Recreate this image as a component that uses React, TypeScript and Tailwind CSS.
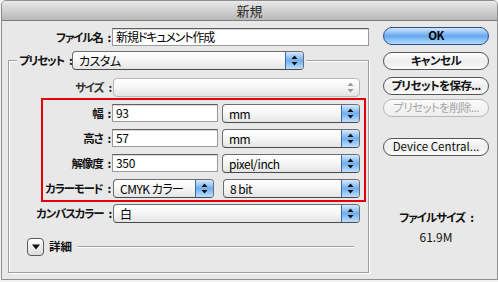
import type { ReactNode } from 'react'

function Arrows({ disabled }: { disabled?: boolean }) {
  const c = disabled ? '#9a9a9a' : '#111'
  return (
    <svg width="7" height="11" viewBox="0 0 7 11">
      <path d="M3.5 0.5 L6.5 4 L0.5 4 Z" fill={c} />
      <path d="M0.5 7 L6.5 7 L3.5 10.5 Z" fill={c} />
    </svg>
  )
}

function Popup({ text, className, disabled }: { text: string; className: string; disabled?: boolean }) {
  return (
    <div
      className={`flex h-[19px] shrink-0 overflow-hidden rounded-[4px] border bg-gradient-to-b from-white via-[#f6f6f6] to-[#e4e4e4] ${
        disabled ? 'border-[#b9b9b9]' : 'border-[#6d6d6d] border-b-[#4a4a4a]'
      } ${className}`}
    >
      <span className="flex-1 truncate whitespace-nowrap pl-[6px] text-[12px] leading-[17px] tracking-[-0.5px] text-black">
        {text}
      </span>
      {disabled ? (
        <span className="flex w-[18px] items-center justify-center">
          <Arrows disabled />
        </span>
      ) : (
        <span className="flex w-[18px] items-center justify-center border-l border-[#3f69a8] bg-gradient-to-b from-[#d7eafd] via-[#6fafef] to-[#bfe0fe]">
          <Arrows />
        </span>
      )}
    </div>
  )
}

function Field({ text, className, jp }: { text: string; className: string; jp?: boolean }) {
  return (
    <div
      className={`h-[18px] shrink-0 whitespace-nowrap border border-[#9a9a9a] border-t-[#5f5f5f] bg-white pl-[3px] text-[12px] leading-[16px] text-black shadow-[inset_0_1px_0_#d8d8d8] ${
        jp ? 'tracking-[-1.1px]' : 'tracking-[-0.3px]'
      } ${className}`}
    >
      {text}
    </div>
  )
}

function Label({ children, className }: { children: ReactNode; className: string }) {
  return (
    <div
      className={`shrink-0 whitespace-nowrap pr-[2px] text-right text-[11.5px] font-bold leading-[19px] tracking-[-1.2px] text-[#111] ${className}`}
    >
      {children}
      <span className="ml-[5px]">:</span>
    </div>
  )
}

function AquaButton({ children, kind }: { children: ReactNode; kind?: 'default' | 'disabled' }) {
  const look =
    kind === 'default'
      ? 'border-[#2d4f86] bg-gradient-to-b from-[#d2e7fc] via-[#64a6ee] to-[#b4dcfe] text-black font-bold'
      : kind === 'disabled'
        ? 'border-[#b8b8b8] bg-gradient-to-b from-[#fafafa] to-[#eeeeee] text-[#a3a3a3]'
        : 'border-[#555] bg-gradient-to-b from-white via-[#ededed] to-[#fbfbfb] text-[#111] font-bold'
  return (
    <div
      className={`flex h-[18px] w-[106px] items-center justify-center whitespace-nowrap rounded-full border text-[11.5px] leading-none tracking-[-0.6px] ${look}`}
    >
      {children}
    </div>
  )
}

function Etch({ className }: { className: string }) {
  return <div className={`h-[2px] border-t border-[#a2a2a2] border-b border-b-white ${className}`} />
}

export default function App() {
  return (
    <div className="h-[282px] w-[498px] overflow-hidden bg-[#f2f2f2] [font-family:'Noto_Sans_CJK_JP','Noto_Sans',sans-serif] [font-feature-settings:'palt']">
      <div className="ml-px flex h-[280px] w-[497px] flex-col overflow-hidden rounded-t-[5px] border border-[#8e8e8e] bg-[#e8e8e8]">
        <div className="flex h-[20px] shrink-0 items-center justify-center border-b border-[#7d7d7d] bg-gradient-to-b from-[#e9e9e9] to-[#b8b8b8] text-[13px] text-[#2a2a2a]">
          新規
        </div>

        <div className="flex flex-1">
          {/* left side */}
          <div className="flex w-[367px] flex-col pl-[6px]">
            <div className="mt-[7px] flex">
              <Label className="w-[104px] leading-[18px]">ファイル名</Label>
              <Field text="新規ドキュメント作成" className="w-[257px]" jp />
            </div>

            <div className="mt-[13px] flex w-[361px] flex-col border-x border-b border-[#9e9e9e] pb-[16px] shadow-[1px_1px_0_#fff,inset_1px_0_0_#fff]">
              <div className="-mt-[9px] flex h-[19px] items-start">
                <Etch className="mt-[9px] w-[8px]" />
                <div className="w-[55px] shrink-0 whitespace-nowrap pl-[2px] text-[11.5px] font-bold leading-[19px] tracking-[-1.2px] text-[#111]">
                  プリセット<span className="ml-[5px]">:</span>
                </div>
                <Popup text="カスタム" className="w-[232px]" />
                <Etch className="mt-[9px] ml-[2px] flex-1" />
              </div>

              <div className="mt-[8px] flex">
                <Label className="w-[104px] !text-[#333]">サイズ</Label>
                <Popup text="" className="w-[247px]" disabled />
              </div>

              <div className="mt-px ml-[32px] flex h-[104px] w-[325px] flex-col gap-[6px] border-2 border-[#e3000b] pt-[4px]">
                <div className="flex">
                  <Label className="w-[69px]">幅</Label>
                  <Field text="93" className="w-[106px]" />
                  <Popup text="mm" className="ml-[4px] w-[138px]" />
                </div>
                <div className="flex">
                  <Label className="w-[69px]">高さ</Label>
                  <Field text="57" className="w-[106px]" />
                  <Popup text="mm" className="ml-[4px] w-[138px]" />
                </div>
                <div className="flex">
                  <Label className="w-[69px]">解像度</Label>
                  <Field text="350" className="w-[106px]" />
                  <Popup text="pixel/inch" className="ml-[4px] w-[138px]" />
                </div>
                <div className="flex">
                  <Label className="w-[69px]">カラーモード</Label>
                  <Popup text="CMYK カラー" className="ml-px w-[101px]" />
                  <Popup text="8 bit" className="ml-[9px] w-[137px]" />
                </div>
              </div>

              <div className="mt-[2px] flex">
                <Label className="w-[104px]">カンバスカラー</Label>
                <Popup text="白" className="w-[247px]" />
              </div>

              <div className="mt-[15px] flex items-center">
                <div className="ml-[18px] flex h-[18px] w-[17px] items-center justify-center rounded-[4px] border border-[#5c5c5c] bg-gradient-to-b from-white to-[#dcdcdc]">
                  <svg width="8" height="6" viewBox="0 0 8 6">
                    <path d="M0 0.5 L8 0.5 L4 5.5 Z" fill="#111" />
                  </svg>
                </div>
                <span className="ml-[5px] text-[11.5px] font-bold text-[#111]">詳細</span>
                <Etch className="ml-[5px] mr-[14px] flex-1" />
              </div>
            </div>
          </div>

          {/* right side */}
          <div className="ml-[14px] flex w-[106px] flex-col items-center">
            <div className="mt-[6px]">
              <AquaButton kind="default">OK</AquaButton>
            </div>
            <div className="mt-[7px]">
              <AquaButton>キャンセル</AquaButton>
            </div>
            <div className="mt-[7px]">
              <AquaButton>プリセットを保存...</AquaButton>
            </div>
            <div className="mt-[4px]">
              <AquaButton kind="disabled">プリセットを削除...</AquaButton>
            </div>
            <div className="mt-[21px]">
              <AquaButton>
                <span className="text-[11.5px] font-normal tracking-normal">Device Central...</span>
              </AquaButton>
            </div>
            <div className="mt-[53px] whitespace-nowrap text-[11.5px] font-bold leading-[16px] tracking-[-1px] text-[#111]">
              ファイルサイズ<span className="ml-[5px]">:</span>
            </div>
            <div className="mt-[4px] text-[12px] leading-[16px] text-[#111]">61.9M</div>
          </div>
        </div>
      </div>
    </div>
  )
}
